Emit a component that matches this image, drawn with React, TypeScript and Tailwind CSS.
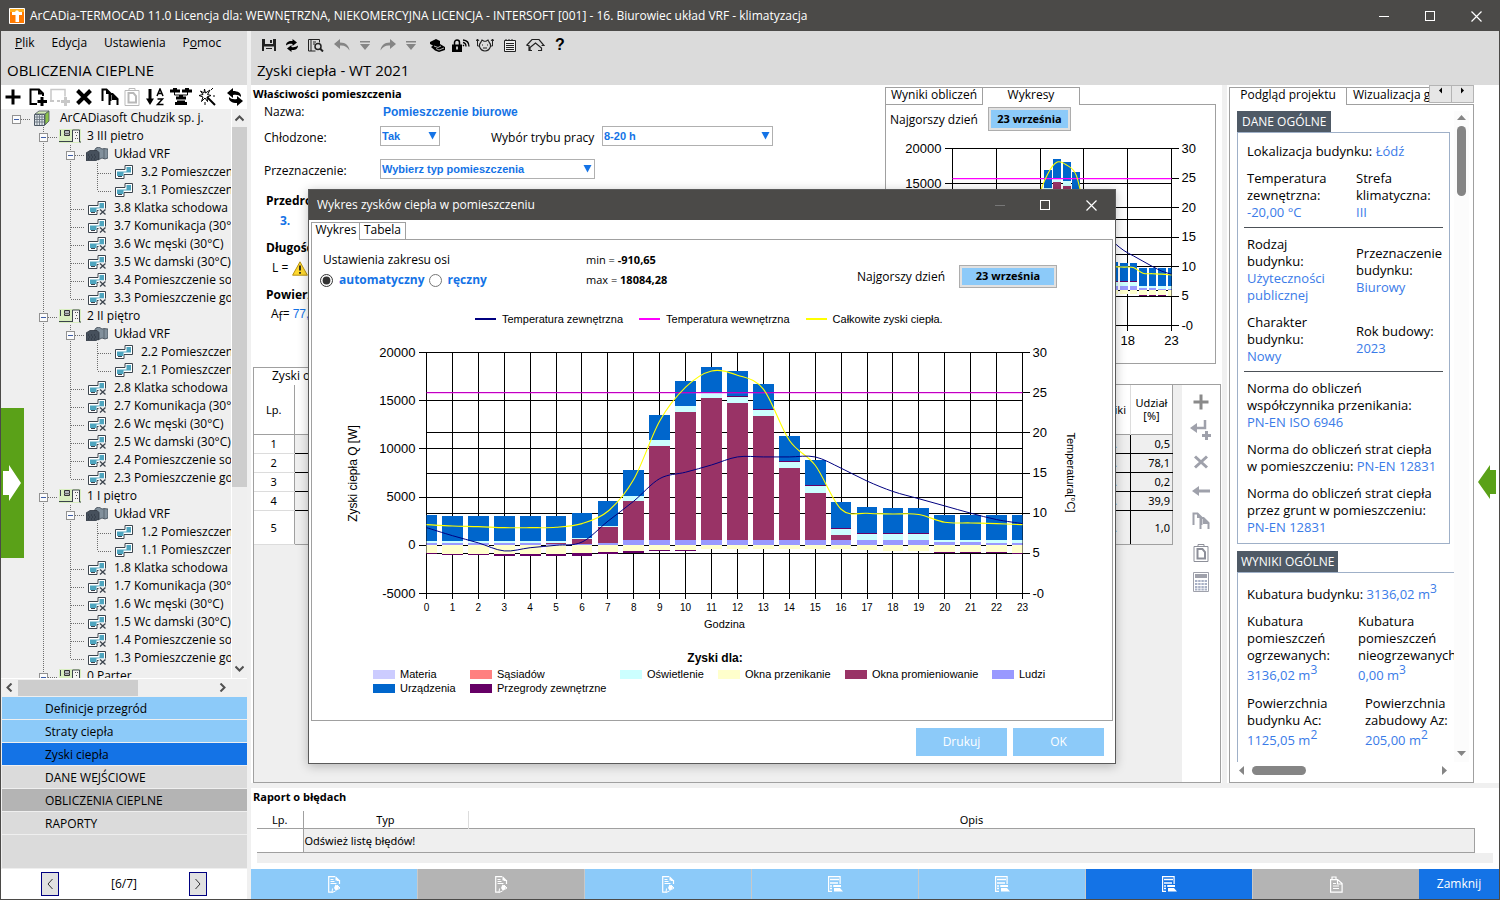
import React from "react";

/* ---------- chart ---------- */

type Hour = {
  people: number;
  radiation: number;
  lighting: number;
  walls: number;
  devices: number;
  windows: number;
  wallsLoss: number;
};

const row = (v: number[]): Hour => ({
  people: v[0],
  radiation: v[1],
  lighting: v[2],
  walls: v[3],
  devices: v[4],
  windows: v[5],
  wallsLoss: v[6],
});

const hours: Hour[] = [
  [210, 0, 240, 0, 2660, 830, 70],
  [210, 0, 210, 0, 2600, 865, 170],
  [210, 0, 210, 0, 2600, 865, 170],
  [210, 0, 210, 0, 2600, 930, 210],
  [210, 0, 210, 0, 2600, 930, 210],
  [140, 70, 210, 0, 2600, 930, 210],
  [170, 450, 100, 0, 2600, 830, 310],
  [210, 1660, 100, 0, 2600, 730, 170],
  [520, 4050, 520, 0, 2700, 620, 210],
  [520, 9760, 620, 0, 2600, 520, 100],
  [520, 13290, 620, 0, 2600, 520, 100],
  [520, 14740, 620, 0, 2600, 410, 0],
  [520, 14220, 620, 100, 2600, 410, 0],
  [520, 12870, 620, 100, 2600, 410, 0],
  [520, 7470, 620, 100, 2600, 410, 0],
  [520, 4880, 730, 100, 2600, 410, 0],
  [520, 520, 620, 100, 2700, 410, 0],
  [520, 0, 620, 100, 2700, 520, 0],
  [520, 0, 620, 100, 2600, 620, 0],
  [520, 0, 620, 100, 2600, 620, 0],
  [310, 0, 210, 0, 2600, 730, 100],
  [310, 0, 210, 0, 2600, 730, 100],
  [210, 0, 310, 0, 2600, 730, 100],
  [210, 0, 310, 0, 2600, 830, 70],
].map(row);

const totals = [
  2145, 2000, 1940, 1830, 1830, 1870, 2250, 3530, 6850, 12900, 16400, 18084, 17650, 16200, 10900,
  8300, 3740, 3320, 3250, 3200, 2390, 2320, 2250, 2145,
];
const outside = [
  8.2, 7.2, 6.3, 5.3, 5.7, 6.0, 6.4, 9, 11.5, 14.3, 15.1, 16, 17, 17, 17, 17, 15.6, 14, 12.7, 11.8,
  10.9, 10, 9.2, 8.7,
];

function smooth(pts: [number, number][]) {
  let d = `M${pts[0][0]} ${pts[0][1]}`;
  for (let i = 0; i < pts.length - 1; i++) {
    const a = pts[Math.max(i - 1, 0)];
    const b = pts[i];
    const c = pts[i + 1];
    const e = pts[Math.min(i + 2, pts.length - 1)];
    d += `C${b[0] + (c[0] - a[0]) / 6} ${b[1] + (c[1] - a[1]) / 6} ${c[0] - (e[0] - b[0]) / 6} ${
      c[1] - (e[1] - b[1]) / 6
    } ${c[0]} ${c[1]}`;
  }
  return d;
}

type GainsChartProps = {
  id: string;
  width: number;
  height: number;
  left: number;
  right: number;
  top: number;
  bottom: number;
  divisions: number;
  xLabels: string[];
  xFont: number;
  xLabelDy: number;
  indoorColor: string;
  titles?: boolean;
  className?: string;
};

function GainsChart(p: GainsChartProps) {
  const step = (p.right - p.left) / 23;
  const px = (h: number) => p.left + h * step;
  const w = (v: number) => p.bottom - ((v + 5000) / 25000) * (p.bottom - p.top);
  const t = (v: number) => p.bottom - (v / 30) * (p.bottom - p.top);
  const snap = (v: number) => Math.round(v - 0.5) + 0.5;
  const bar = step * 0.8;
  const watts = [20000, 15000, 10000, 5000, 0, -5000];
  const temps = [30, 25, 20, 15, 10, 5, 0];
  const indoorY = Math.floor(t(25));
  return (
    <svg
      viewBox={`0 0 ${p.width} ${p.height}`}
      width={p.width}
      height={p.height}
      className={p.className}
      fontFamily="'Liberation Sans', Arial, sans-serif"
      fontSize="13"
      role="img"
      aria-label="Wykres zysków ciepła"
    >
      <clipPath id={p.id}>
        <rect x={p.left} y={p.top} width={p.right - p.left} height={p.bottom - p.top} />
      </clipPath>
      <g stroke="#000" shapeRendering="crispEdges">
        {watts.map((v) => (
          <line key={v} x1={p.left - 8} x2={p.right} y1={snap(w(v))} y2={snap(w(v))} />
        ))}
        {temps.map((v) => (
          <line key={v} x1={v === 25 ? p.right : p.left} x2={p.right + 7} y1={snap(t(v))} y2={snap(t(v))} />
        ))}
        {Array.from({ length: p.divisions + 1 }, (_, i) => {
          const x = snap(p.left + (i * (p.right - p.left)) / p.divisions);
          return <line key={i} x1={x} x2={x} y1={p.top} y2={p.bottom + 5} />;
        })}
      </g>
      <g clipPath={`url(#${p.id})`} shapeRendering="crispEdges">
        {hours.map((h, i) => {
          const parts: [number, string][] = [
            [h.people, "#9999ff"],
            [h.radiation, "#993366"],
            [h.lighting, "#ccffff"],
            [h.walls, "#660066"],
            [h.devices, "#0066cc"],
          ];
          let base = 0;
          const x = px(i) - bar / 2;
          return (
            <g key={i}>
              {parts.map(([v, fill]) => {
                const y0 = w(base);
                base += v;
                return v ? <rect key={fill} x={x} width={bar} y={w(base)} height={y0 - w(base)} fill={fill} /> : null;
              })}
              <rect x={x} width={bar} y={w(0)} height={w(-h.windows) - w(0)} fill="#ffffcc" />
              {h.wallsLoss > 0 && (
                <rect
                  x={x}
                  width={bar}
                  y={w(-h.windows)}
                  height={w(-h.windows - h.wallsLoss) - w(-h.windows)}
                  fill="#660066"
                />
              )}
            </g>
          );
        })}
      </g>
      <rect x={p.left} y={indoorY} width={p.right - p.left} height="1" fill={p.indoorColor} />
      <rect x={p.left} y={indoorY + 1} width={p.right - p.left} height="1" fill="#ff00ff" fillOpacity="0.25" />
      <g fill="none">
        <path d={smooth(totals.map((v, i) => [px(i), w(v)]))} stroke="#ffff00" strokeWidth="1.1" />
        <path d={smooth(outside.map((v, i) => [px(i), t(v)]))} stroke="#000080" strokeWidth="1" />
      </g>
      <g textAnchor="end">
        {watts.map((v) => (
          <text key={v} x={p.left - 11} y={w(v) + 4}>
            {v}
          </text>
        ))}
      </g>
      {temps.map((v) => (
        <text key={v} x={p.right + 10} y={t(v) + 4}>
          {v === 0 ? "-0" : v}
        </text>
      ))}
      <g textAnchor="middle" fontSize={p.xFont}>
        {p.xLabels.map((l, i) => (
          <text key={i} x={p.left + (i * (p.right - p.left)) / (p.xLabels.length - 1)} y={p.bottom + p.xLabelDy}>
            {l}
          </text>
        ))}
      </g>
      {p.titles && (
        <g fontSize="11" textAnchor="middle">
          <text x={p.left + 298} y={p.bottom + 34}>
            Godzina
          </text>
          <text transform={`translate(${p.left - 70} ${p.top + 121}) rotate(-90)`} fontSize="12">
            Zyski ciepła Q [W]
          </text>
          <text transform={`translate(${p.right + 44} ${p.top + 120}) rotate(90)`}>Temperatura[°C]</text>
        </g>
      )}
    </svg>
  );
}

/* ---------- icons ---------- */

type IconProps = { className?: string };

const PlusIcon = ({ className = "" }: IconProps) => (
  <svg width="16" height="16" viewBox="0 0 16 16" className={className}>
    <path d="M8 0.5v15M0.5 8h15" stroke="currentColor" strokeWidth="3" />
  </svg>
);
const CrossIcon = ({ className = "" }: IconProps) => (
  <svg width="16" height="16" viewBox="0 0 16 16" className={className}>
    <path d="M1.500 1.500l13 13M14.500 1.500l-13 13" stroke="currentColor" strokeWidth="4" />
  </svg>
);
const ThinCrossIcon = () => (
  <svg width="16" height="16" viewBox="0 0 16 16">
    <path d="M2 2.500l12 11M14 2.500l-12 11" stroke="currentColor" strokeWidth="3" />
  </svg>
);
const AddPageIcon = () => (
  <svg width="18" height="18" viewBox="0 0 18 18">
    <path d="M8 16H1.500V1.500h8.500l4 4V8M10 1v4.500h4" fill="none" stroke="#000" strokeWidth="2" />
    <path d="M13 9v9M8.500 13.500H18" stroke="#000" strokeWidth="3" />
  </svg>
);
const AddRoomIcon = () => (
  <svg width="21" height="18" viewBox="0 0 21 18" className="text-[#c8c8c8]">
    <path d="M1 12.500V1.500h14v7" fill="none" stroke="currentColor" strokeWidth="1.500" />
    <path d="M0 13h4M7 13h3" stroke="currentColor" strokeWidth="2" />
    <path d="M15.500 9v9M11 13.500h9" stroke="currentColor" strokeWidth="3" />
  </svg>
);
const CopyIcon = ({ className = "" }: IconProps) => (
  <svg width="18" height="18" viewBox="0 0 18 18" className={className}>
    <path d="M1.500 13V1.500h4l4 4V13M8.500 17V6h3l5 5v6" fill="none" stroke="currentColor" strokeWidth="2" />
    <path d="M5 1l5 5H5zM11 5.500l6.500 6.500H11z" fill="currentColor" />
  </svg>
);
const PasteIcon = ({ className = "" }: IconProps) => (
  <svg width="16" height="18" viewBox="0 0 16 18" className={className}>
    <path d="M1 2.500h14v15H1zM5 2V.5h6V2" fill="none" stroke="currentColor" />
    <path d="M4.500 5h5l2.500 3v6.500H4.500z" fill="none" stroke="currentColor" strokeWidth="2" />
  </svg>
);
const SortIcon = () => (
  <svg width="19" height="18" viewBox="0 0 19 18">
    <path d="M4 1v12" stroke="#000" strokeWidth="3" />
    <path d="M0 10.500h8L4 17z" />
    <path d="M11 8l3-7 3 7M12 5.500h4M11.500 11h5l-5 5.500h6" fill="none" stroke="#000" strokeWidth="1.500" />
  </svg>
);
const TreeIcon = () => (
  <svg width="22" height="18" viewBox="0 0 22 18">
    <path d="M0 1.500h3V0h4v1.500h3v3H0zM12 1.500h3V0h4v1.500h3v3H12zM6 8.500h3V7h4v1.500h3v3H6zM5 14h2v-1.500h8V14h2v3H5z" />
    <path d="M4.500 4v3h13V4" fill="none" stroke="#000" strokeWidth="1" />
  </svg>
);
const WandIcon = () => (
  <svg width="18" height="18" viewBox="0 0 18 18">
    <path d="M8 8l9 9" stroke="#000" strokeWidth="2" />
    <path
      d="M6.500 1l1 4 4.500-3-2.500 4.500 3.500 1-4 1.500.5 4.500L7 10l-3.500 3.500L5 9 1 7.500 5 6.500 2.500 3l3.500 2z"
      fill="#fff"
      stroke="#000"
    />
    <path d="M13 2l2-2M15 8h2M7 14v3" stroke="#000" />
  </svg>
);
const SyncIcon = ({ size = 18 }: { size?: number }) => (
  <svg width={size} height={size} viewBox="0 0 18 18">
    <path d="M7 0L1 5l6 5V7c4-.5 6 0 8 2 .5-4-3-6-8-6zM11 18l6-5-6-5v3c-4 .5-6 0-8-2-.5 4 3 6 8 6z" />
  </svg>
);

const SaveIcon = () => (
  <svg width="14" height="12" viewBox="0 0 14 12">
    <path fillRule="evenodd" d="M0 0h14v12H0zM3 0v5h8V0zM2 7.500V12h10V7.500z" fill="#222" />
    <path d="M8 1h2v3H8zM4 9h6v1H4z" fill="#222" />
  </svg>
);
const SwapIcon = () => (
  <svg width="12" height="13" viewBox="0 0 12 13">
    <path d="M0 6.500C0 3 3 1.500 6.500 2V0L11 3.500 6.500 7V5C4 4.500 2 5 0 6.500zM12 6.500C12 10 9 11.500 5.500 11v2L1 9.500 5.500 6v2c2.500.5 4.500 0 6.500-1.500z" />
  </svg>
);
const BookSearchIcon = () => (
  <svg width="16" height="13" viewBox="0 0 16 13">
    <path d="M.5.500h11v3M.5.500v11.500h7M3 .5v11.500M5 3h3M5 5h2" fill="none" stroke="#222" />
    <circle cx="10" cy="7.500" r="3" fill="none" stroke="#222" strokeWidth="1.500" />
    <path d="M12 9.500l3 3" stroke="#222" strokeWidth="2" />
  </svg>
);
const UndoIcon = ({ className = "" }: IconProps) => (
  <svg width="16" height="12" viewBox="0 0 16 12" className={className}>
    <path d="M6 0L0 5l6 5V6.500c4-.5 7 1 9.500 5C15 7 12 3.500 6 3.500z" fill="#858585" />
  </svg>
);
const DropIcon = () => (
  <svg width="10" height="9" viewBox="0 0 10 9">
    <path d="M0 0h10v1.500H0zM0 3h10L5 9z" fill="#858585" />
  </svg>
);
const BoxesIcon = () => (
  <svg width="15" height="13" viewBox="0 0 15 13">
    <path d="M0 3l6-3 4 2v3l5 3v3l-6 2-4-1.500L1 8l2-1.500L0 5z" />
    <path d="M4 7l4 1.500L11 7M6 9.500l3 1.500 5-2" stroke="#ddd" fill="none" strokeWidth=".8" />
  </svg>
);
const LockSignalIcon = () => (
  <svg width="18" height="13" viewBox="0 0 18 13">
    <path d="M2.500 6V3.500a2.500 2.500 0 015 0V6" fill="none" stroke="#000" strokeWidth="1.500" />
    <path d="M0 5.500h10V13H0z" />
    <path d="M5 7.500v3" stroke="#fff" strokeWidth="1.500" />
    <path d="M11 7l1-1M11 3.500q3 .5 3 4M11 1q6 .5 6 6.500" fill="none" stroke="#000" strokeWidth="1.300" />
  </svg>
);
const PigIcon = () => (
  <svg width="18" height="14" viewBox="0 0 18 14">
    <path d="M5 4l1-2 2 1.200h2L12 2l1 2q2 2 1.500 4.500Q13 13 9 13T3.500 8.500Q3 6 5 4z" fill="none" stroke="#222" strokeWidth="1.100" />
    <path d="M3.500 8H1.500V1M0 3l1.500-2L3 3M14.500 8h2V1M15 3l1.500-2L18 3" stroke="#222" fill="none" />
    <path d="M6 7h1M11 7h1M7 10h4" stroke="#222" strokeWidth="1.200" />
  </svg>
);
const NotepadIcon = () => (
  <svg width="12" height="13" viewBox="0 0 12 13">
    <path d="M.5 1.500h11v11H.5z" fill="#eee" stroke="#222" />
    <path d="M2 0v2M5 0v2M8 0v2M2 4.500h8M2 6.500h8M2 8.500h8M2 10.500h8" stroke="#222" />
  </svg>
);
const HouseIcon = () => (
  <svg width="19" height="14" viewBox="0 0 19 14">
    <path d="M.5 7.500L6 1.500h7l5 6h-2.500M.5 7.500H3v5h3M4 12.500v-3L9.500 5l6 5v2.500H12" fill="none" stroke="#222" strokeWidth="1.200" />
  </svg>
);

const BuildingIcon = () => (
  <svg width="16" height="16" viewBox="0 0 16 16" className="ml-1">
    <path d="M1 4l4-3h10l-4 3z" fill="#d6ebb8" stroke="#4c5763" strokeWidth=".8" />
    <path d="M11 4l4-3v10l-4 4z" fill="#8bc34a" stroke="#4c5763" strokeWidth=".8" />
    <path d="M.5 4.500h10v11H.5z" fill="#dfe5ea" stroke="#4c5763" />
    <path d="M3 4v11M5.500 4v11M8 4v11M.5 7h10M.5 9.500h10M.5 12h10" stroke="#6b7682" strokeWidth=".9" />
  </svg>
);
const FloorIcon = () => (
  <svg width="22" height="14" viewBox="0 0 22 14" className="ml-[2px]">
    <path d="M0 0h22v14H0z" fill="#d9eec0" />
    <path d="M14 1h7v12h-7z" fill="#f4f4f4" />
    <path d="M1.500 1v6M0 12.500h13.500M13.500 13V1h7v12h1.500" fill="none" stroke="#3c444d" />
    <path d="M5.500 1.500h5v5h-5z" fill="#b4b8bd" stroke="#333" />
    <path d="M5 4.500h6" stroke="#666" />
    <path d="M16 3.500h1M18 3.500h1M17 6.500h1M16 9.500h1M18 9.500h1" stroke="#555" />
  </svg>
);
const VrfIcon = () => (
  <svg width="22" height="14" viewBox="0 0 22 14" className="ml-[2px]">
    <path d="M8 4l2-3 3-1 3 2 2-.5L22 2v9l-3 1-3-1-4 2z" fill="#82909c" stroke="#3f4954" strokeWidth=".8" />
    <path d="M18 2v10" stroke="#3f4954" strokeWidth=".6" />
    <path d="M0 6l4-2.500h7l2 2V12l-3 1.500H0z" fill="#46505c" stroke="#2e3640" strokeWidth=".8" />
    <path d="M2 8h1M5 8h1M8 8h1M3 10h1M6 10h1M9 10h1M2 12h1M5 12h1M8 12h1" stroke="#28303a" />
  </svg>
);
const RoomIcon = ({ crossed = false }: { crossed?: boolean }) => (
  <svg width="19" height="14" viewBox="0 0 19 14" className="ml-1">
    <path d="M.5 4.500H10V.5h7.500v9H9v4H.5z" fill="#fff" stroke="#3c444d" />
    <path d="M2 6.500h9.500V2H16v5.500H8.500V11H2z" fill="#4ea5bf" />
    <path d="M3 11.500h4" stroke="#3c444d" />
    {crossed && (
      <>
        <path d="M10.500 7.500H19V14h-8.500z" fill="#efefef" />
        <path d="M12 8.500l5.500 5M17.500 8.500l-5.500 5" stroke="#3c444d" strokeWidth="1.300" />
      </>
    )}
  </svg>
);

const BackPlusIcon = () => (
  <svg width="22" height="20" viewBox="0 0 22 20" className="text-[#9fa1ab]">
    <path d="M15 0v8H5" fill="none" stroke="currentColor" strokeWidth="2.500" />
    <path d="M0 8l7-5v10z" fill="currentColor" />
    <path d="M12 15.500h9M16.500 11v9" stroke="currentColor" strokeWidth="3" />
  </svg>
);
const BackIcon = () => (
  <svg width="18" height="12" viewBox="0 0 18 12" className="text-[#9fa1ab]">
    <path d="M0 6l7-5v10z" fill="currentColor" />
    <path d="M5 6h13" stroke="currentColor" strokeWidth="3" />
  </svg>
);
const CalcIcon = () => (
  <svg width="16" height="20" viewBox="0 0 16 20">
    <path d="M.5.500h15v19H.5z" fill="#fff" stroke="#9fa1ab" />
    <path d="M2 2h12v4H2z" fill="#9fa1ab" />
    <path d="M2 9h12M2 12h12M2 15h12M2 17.500h12" stroke="#a9b1c6" strokeWidth="1.800" strokeDasharray="2.400 0.800" />
  </svg>
);
const EditPageIcon = () => (
  <svg width="13" height="17" viewBox="0 0 13 17">
    <path d="M7 .700H.700v15.500H4M9 4.500h2.500V8" fill="none" stroke="#fff" strokeWidth="1.200" />
    <path d="M7.500 0l4.500 4.500H7.500zM7.500 8.500L11 11l-1 1.500L8 15l-2-3z" fill="#fff" />
    <path d="M9 9l3 3-2.500 1.500zM2.500 3.500h3M2.500 5.500h4M2.500 7.500h6M4.500 12.500L4 16.500l3.500-1.500" stroke="#fff" fill="none" />
  </svg>
);
const SheetIcon = () => (
  <svg width="15" height="16" viewBox="0 0 15 16">
    <path d="M4 15.400H.600V.600h11.500V8" fill="none" stroke="#fff" strokeWidth="1.200" />
    <path d="M2 3.500h9M2 7h8M2 10h2M5 10h5M2 12.500h2" stroke="#fff" strokeWidth="1.500" />
    <path d="M6 9h7v2H6zM6 12h6l3 3.500H6z" fill="#fff" />
  </svg>
);
const ReportIcon = () => (
  <svg width="13" height="17" viewBox="0 0 13 17">
    <path d="M.6 3.600h7l4.500 4v8.500H.6zM2 3V1h4v2M7.500 4v4H12" fill="none" stroke="#fff" strokeWidth="1.200" />
    <path d="M3 7.500h3M3 10h6M3 12.500h6" stroke="#fff" />
  </svg>
);

const Min = ({ className = "" }: IconProps) => (
  <svg width="11" height="11" viewBox="0 0 11 11" className={className}>
    <path d="M0 5.500h10" stroke="currentColor" shapeRendering="crispEdges" />
  </svg>
);
const Max = () => (
  <svg width="11" height="11" viewBox="0 0 11 11">
    <path d="M.5.500h9v9h-9z" stroke="currentColor" fill="none" shapeRendering="crispEdges" />
  </svg>
);
const Close = () => (
  <svg width="11" height="11" viewBox="0 0 11 11">
    <path d="M.5.500l10 10M10.500.500l-10 10" stroke="currentColor" strokeWidth="1.200" />
  </svg>
);
const Chevron = ({ d }: { d: string }) => (
  <svg width="9" height="9" viewBox="0 0 9 9">
    <path d={d} fill="none" stroke="#505050" strokeWidth="2" />
  </svg>
);
const Tri = ({ d, className = "fill-[#858585]" }: { d: string; className?: string }) => (
  <svg width="9" height="9" viewBox="0 0 9 9" className={className}>
    <path d={d} />
  </svg>
);
const LEFT = "M6.500 .5l-4 4 4 4";
const RIGHT = "M2.500 .5l4 4-4 4";
const UP = "M.5 6.500l4-4 4 4";
const DOWN = "M.5 2.500l4 4 4-4";

/* ---------- room tree ---------- */

type Cell = "blank" | "line" | "tee" | "end" | "box" | "rootbox";

const Guide = ({ kind }: { kind: Cell }) => (
  <svg width="27" height="18" viewBox="0 0 27 18" className="shrink-0">
    <g stroke="#6d6d6d" strokeDasharray="1 1" shapeRendering="crispEdges">
      {(kind === "line" || kind === "tee" || kind === "box") && <path d="M13.500 0v18" />}
      {kind === "end" && <path d="M13.500 0v10" />}
      {kind !== "blank" && kind !== "line" && <path d="M14 10.500h14" />}
    </g>
    {(kind === "box" || kind === "rootbox") && (
      <g shapeRendering="crispEdges">
        <rect x="9.500" y="6.500" width="8" height="8" fill="#fbfbfb" stroke="#919191" />
        <path d="M11 10.500h5" stroke="#3f5fa8" />
      </g>
    )}
  </svg>
);

type Node = { cells: Cell[]; icon: React.ReactNode; pad: string; text: string };

const plainRooms = [
  "8 Klatka schodowa (30°C)",
  "7 Komunikacja (30°C)",
  "6 Wc męski (30°C)",
  "5 Wc damski (30°C)",
  "4 Pomieszczenie socjalne",
  "3 Pomieszczenie gospodarcze",
];

const floorNodes = (n: number, name: string): Node[] => [
  { cells: ["blank", "box"], icon: <FloorIcon />, pad: "pl-[6px]", text: name },
  { cells: ["blank", "line", "box"], icon: <VrfIcon />, pad: "pl-[6px]", text: "Układ VRF" },
  { cells: ["blank", "line", "line", "tee"], icon: <RoomIcon />, pad: "pl-[7px]", text: `${n}.2 Pomieszczenie` },
  { cells: ["blank", "line", "line", "end"], icon: <RoomIcon />, pad: "pl-[7px]", text: `${n}.1 Pomieszczenie` },
  ...plainRooms.map((r, i): Node => ({
    cells: ["blank", "line", i === plainRooms.length - 1 ? "end" : "tee"],
    icon: <RoomIcon crossed />,
    pad: "pl-[7px]",
    text: `${n}.${r}`,
  })),
];

const nodes: Node[] = [
  { cells: ["rootbox"], icon: <BuildingIcon />, pad: "pl-[10px]", text: "ArCADiasoft Chudzik sp. j." },
  ...floorNodes(3, "3 III pietro"),
  ...floorNodes(2, "2 II piętro"),
  ...floorNodes(1, "1 I piętro"),
  { cells: ["blank", "box"], icon: <FloorIcon />, pad: "pl-[6px]", text: "0 Parter" },
];

function Sidebar() {
  return (
    <aside className="flex w-[246px] shrink-0 flex-col bg-[#efefef]">
      <div className="h-[54px] shrink-0 bg-[#dbdbdb]">
        <nav className="flex gap-[17px] pt-[3px] pl-[14px] text-[12px] leading-[18px]">
          <button><u>P</u>lik</button>
          <button>Edycja</button>
          <button>Ustawienia</button>
          <button>P<u>o</u>moc</button>
        </nav>
        <h2 className="pt-[8px] pl-[6px] text-[15px] leading-[20px]">OBLICZENIA CIEPLNE</h2>
      </div>
      <div className="flex h-6 shrink-0 items-center justify-between bg-white pr-[3px] pl-[4px]">
        <button aria-label="Dodaj"><PlusIcon /></button>
        <button aria-label="Dodaj stronę" className="pl-[3px]"><AddPageIcon /></button>
        <button aria-label="Dodaj pomieszczenie" className="-ml-[3px]"><AddRoomIcon /></button>
        <button aria-label="Usuń"><CrossIcon /></button>
        <button aria-label="Kopiuj" className="pl-[3px]"><CopyIcon /></button>
        <button aria-label="Wklej"><PasteIcon className="text-[#b9b9b9]" /></button>
        <button aria-label="Sortuj"><SortIcon /></button>
        <button aria-label="Struktura"><TreeIcon /></button>
        <button aria-label="Kreator"><WandIcon /></button>
        <button aria-label="Odśwież" className="pl-[5px]"><SyncIcon /></button>
      </div>
      <div className="flex min-h-0 flex-1">
        <ul className="min-w-0 flex-1 overflow-hidden pl-[2px] text-[12px] leading-[18px]">
          {nodes.map((n, i) => (
            <li key={i} className="flex h-[18px] items-center whitespace-nowrap">
              {n.cells.map((c, k) => (
                <Guide key={k} kind={c} />
              ))}
              <span className="shrink-0">{n.icon}</span>
              <span className={n.pad}>{n.text}</span>
            </li>
          ))}
        </ul>
        <div className="flex w-[16px] shrink-0 flex-col items-center justify-between border-l border-white py-[5px]">
          <Chevron d={UP} />
          <div className="mt-1 w-full flex-1">
            <div className="h-[67%] w-full bg-[#cdcdcd]" />
          </div>
          <Chevron d={DOWN} />
        </div>
      </div>
      <div className="flex h-[18px] shrink-0 items-center border-t border-white pr-5 pl-1">
        <Chevron d={LEFT} />
        <div className="ml-1 h-4 flex-1">
          <div className="h-full w-[60%] bg-[#cdcdcd]" />
        </div>
        <Chevron d={RIGHT} />
      </div>
      <nav className="flex flex-col pt-px pl-px text-[12px] leading-[24px]">
        <button className="mb-px h-[22px] bg-[#8ccaf9] pl-[43px] text-left">Definicje przegród</button>
        <button className="mb-px h-[22px] bg-[#8ccaf9] pl-[43px] text-left">Straty ciepła</button>
        <button className="mb-px h-[22px] bg-[#1473e6] pl-[43px] text-left">Zyski ciepła</button>
        <button className="mb-px h-[22px] bg-[#dbdbdb] pl-[43px] text-left">DANE WEJŚCIOWE</button>
        <button className="mb-px h-[22px] bg-[#b4b4b4] pl-[43px] text-left">OBLICZENIA CIEPLNE</button>
        <button className="mb-px h-[22px] bg-[#dbdbdb] pl-[43px] text-left">RAPORTY</button>
        <div className="mb-px h-[33px] bg-[#dbdbdb]" />
      </nav>
      <div className="flex h-[30px] shrink-0 items-center justify-between bg-white px-[40px] text-[12px]">
        <button aria-label="Poprzedni" className="flex h-6 w-[18px] items-center justify-center border border-[#000080] bg-[#e1e1e1]">
          <svg width="6" height="12" viewBox="0 0 6 12"><path d="M5.500 1L1 6l4.500 5" fill="none" stroke="#333" /></svg>
        </button>
        <span>[6/7]</span>
        <button aria-label="Następny" className="flex h-6 w-[18px] items-center justify-center border border-[#000080] bg-[#e1e1e1]">
          <svg width="6" height="12" viewBox="0 0 6 12"><path d="M.5 1L5 6 .5 11" fill="none" stroke="#333" /></svg>
        </button>
      </div>
    </aside>
  );
}

/* ---------- centre ---------- */

function Combo({ id, value, width }: { id: string; value: string; width: string }) {
  return (
    <div className={`relative ${width}`}>
      <select
        id={id}
        className="block h-5 w-full appearance-none border border-[#b0b0b0] bg-white pl-px font-['Liberation_Sans',Arial,sans-serif] text-[11px] font-bold text-[#1473e6]"
      >
        <option>{value}</option>
      </select>
      <Tri d="M.5 1h8l-4 7.500z" className="pointer-events-none absolute top-[5px] right-[3px] fill-[#1473e6]" />
    </div>
  );
}

function RoomForm() {
  return (
    <section className="min-w-0 flex-1 pl-[2px] text-[12px] leading-[16px]">
      <h3 className="text-[11px] leading-[18px] font-bold">Właściwości pomieszczenia</h3>
      <div className="flex h-[18px] items-center pl-[11px]">
        <span className="w-[119px]">Nazwa:</span>
        <span className="font-['Liberation_Sans',Arial,sans-serif] text-[12px] font-bold text-[#1473e6]">Pomieszczenie biurowe</span>
      </div>
      <div className="flex h-[29px] items-center pl-[11px]">
        <label htmlFor="cooled" className="w-[116px] pt-[5px]">Chłodzone:</label>
        <Combo id="cooled" value="Tak" width="w-[60px]" />
        <label htmlFor="mode" className="ml-[51px] w-[111px] pt-[5px]">Wybór trybu pracy</label>
        <Combo id="mode" value="8-20 h" width="w-[171px]" />
      </div>
      <div className="flex h-[38px] items-center pl-[11px]">
        <label htmlFor="purpose" className="w-[116px] pt-1">Przeznaczenie:</label>
        <Combo id="purpose" value="Wybierz typ pomieszczenia" width="w-[215px]" />
      </div>
      <div className="pl-[13px]">
        <h4 className="mt-[5px] font-bold">Przedrostek</h4>
        <p className="mt-[4px] pl-[14px] font-bold text-[#1473e6]">3.</p>
        <h4 className="mt-[11px] font-bold">Długość</h4>
        <p className="mt-1 flex items-center gap-1 pl-[6px]">
          L =
          <svg width="16" height="15" viewBox="0 0 16 15">
            <path d="M8 .8l7.400 13.400H.6z" fill="#ffd92e" stroke="#b99214" strokeLinejoin="round" />
            <path d="M8 4.500v5M8 11v1.800" stroke="#222" strokeWidth="1.800" />
          </svg>
        </p>
        <h4 className="mt-[11px] font-bold">Powierzchnia</h4>
        <p className="mt-[3px] pl-[5px]">
          A<sub className="text-[12px]">f</sub>={" "}
          <span className="font-['Liberation_Sans',Arial,sans-serif] text-[#1473e6]">77,04</span>
        </p>
      </div>
    </section>
  );
}

function DayButton({ className = "" }: IconProps) {
  return (
    <button className={`border border-[#adadad] bg-[#e1e1e1] p-[2px] ${className}`}>
      <span className="flex h-full items-center justify-center bg-[#8ccaf9] text-[11px] font-bold">23 września</span>
    </button>
  );
}

function ResultsCard() {
  return (
    <section className="mr-[6px] flex w-[331px] shrink-0 flex-col pt-[2px] text-[12px] leading-[14px]">
      <div className="flex h-[17px] items-end">
        <button className="h-[17px] w-[98px] border border-b-0 border-[#a0a0a0] pb-[2px]">Wyniki obliczeń</button>
        <button className="z-10 -mb-px h-[18px] w-[97px] border border-b-0 border-l-0 border-[#a0a0a0] bg-white pb-[3px]">Wykresy</button>
      </div>
      <div className="flex-1 border border-[#a0a0a0]">
        <div className="flex h-[28px] items-center pl-[4px]">
          <span className="w-[98px] pt-[2px]">Najgorszy dzień</span>
          <DayButton className="h-6 w-[83px]" />
        </div>
        <GainsChart
          id="clip-small"
          width={329}
          height={230}
          left={66.5}
          right={285.5}
          top={15.5}
          bottom={192.5}
          divisions={5}
          xLabels={["0", "3", "8", "13", "18", "23"]}
          xFont={13}
          xLabelDy={19}
          indoorColor="#ff00ff"
        />
      </div>
    </section>
  );
}

const gains = [
  ["1", "0,5", "h-[19px]"],
  ["2", "78,1", "h-[19px]"],
  ["3", "0,2", "h-[19px]"],
  ["4", "39,9", "h-[19px]"],
  ["5", "1,0", "h-[34px]"],
];

function GainsPanel() {
  return (
    <section className="flex min-h-0 flex-1 flex-col pr-px pl-[2px] text-[12px]">
      <button className="z-10 -mb-px h-[18px] w-[120px] self-start border border-b-0 border-[#a0a0a0] bg-white pb-[2px] pl-[18px] text-left leading-[15px]">Zyski od</button>
      <div className="flex min-h-0 flex-1 border border-[#a0a0a0] bg-[#efefef]">
        <div className="min-w-0 flex-1">
          <table className="w-full table-fixed border-collapse border-r border-b border-[#a0a0a0] font-['Noto_Sans',sans-serif] text-[11px] leading-[13px]">
            <thead>
              <tr className="h-[49px] border-b border-[#a0a0a0] bg-white">
                <th className="w-[40px] border-r border-[#a0a0a0] font-normal">Lp.</th>
                <th className="font-normal" />
                <th className="w-[90px] border-r border-[#dcdcdc] pr-[4px] text-right font-normal">Wyniki</th>
                <th className="w-[42px] font-normal">Udział [%]</th>
              </tr>
            </thead>
            <tbody>
              {gains.map(([n, v, h], i) => {
                const edge = i === gains.length - 1 ? "border-b border-b-[#a0a0a0]" : "border-b border-b-black";
                return (
                  <tr key={n} className={h}>
                    <td className="border-r border-b border-r-[#a0a0a0] border-b-[#dcdcdc] bg-white text-center">{n}</td>
                    <td className={edge} />
                    <td className={`border-r border-r-black pr-[13px] text-right ${edge}`}>.</td>
                    <td className={`pr-[2px] text-right ${edge}`}>{v}</td>
                  </tr>
                );
              })}
            </tbody>
          </table>
        </div>
        <div className="ml-[9px] flex w-[38px] shrink-0 flex-col items-center gap-[14px] bg-white pt-[9px] text-[#9fa1ab]">
          <button aria-label="Dodaj" className="text-[#8a8a8a]"><PlusIcon /></button>
          <button aria-label="Wstaw" className="-mt-1"><BackPlusIcon /></button>
          <button aria-label="Usuń"><ThinCrossIcon /></button>
          <button aria-label="Cofnij" className="h-[14px]"><BackIcon /></button>
          <button aria-label="Kopiuj"><CopyIcon /></button>
          <button aria-label="Wklej" className="text-[#8d8f99]"><PasteIcon /></button>
          <button aria-label="Kalkulator" className="-mt-1"><CalcIcon /></button>
        </div>
      </div>
    </section>
  );
}

/* ---------- project preview ---------- */

const Val = ({ children }: { children: React.ReactNode }) => <span className="text-[#3a7be8]">{children}</span>;
const UnitVal = ({ children }: { children: React.ReactNode }) => (
  <span className="block pt-[3px] text-[#3a7be8]">{children}</span>
);
const Sup = ({ children }: { children: React.ReactNode }) => <sup className="text-[12px]">{children}</sup>;
const Rule = () => <hr className="-mx-[3px] border-[#4c5157]" />;

function Preview() {
  return (
    <aside className="flex min-h-0 w-[245px] shrink-0 flex-col pt-[2px]">
      <div className="flex h-[17px] text-[12px] leading-[14px]">
        <button className="z-10 -mb-px h-[18px] w-[117px] border border-r-0 border-b-0 border-[#a0a0a0] bg-white pb-[3px]">Podgląd projektu</button>
        <button className="w-[83px] overflow-hidden border-t border-l border-[#a0a0a0] pb-[2px] pl-[6px] text-left whitespace-nowrap">Wizualizacja graficzna</button>
        <button aria-label="W lewo" className="-mt-[2px] flex h-[18px] w-[23px] shrink-0 items-center justify-center border border-[#b4b4b4] bg-[#e6e6e6] pb-2">
          <Tri d="M6 1.500v6l-3-3z" className="shrink-0 fill-black" />
        </button>
        <button aria-label="W prawo" className="-mt-[2px] flex h-[18px] w-[22px] shrink-0 items-center justify-center border border-l-0 border-[#b4b4b4] bg-[#e6e6e6] pb-2">
          <Tri d="M3 1.500v6l3-3z" className="shrink-0 fill-black" />
        </button>
      </div>
      <div className="flex min-h-0 flex-1 flex-col border border-[#a0a0a0] pt-[6px] pl-[7px]">
        <div className="flex min-h-0 flex-1">
          <div className="min-w-0 flex-1 overflow-hidden text-[13px] leading-[17px]">
            <h3 className="inline-block h-[21px] bg-[#4f5a66] px-[5px] align-top text-[12px] leading-[21px] text-white">DANE OGÓLNE</h3>
            <div className="mr-1 border border-[#9fb0c8] px-[9px] pt-[10px] pb-[7px]">
              <p>Lokalizacja budynku: <Val>Łódź</Val></p>
              <div className="mt-[10px] mb-[6px] grid grid-cols-[109px_1fr]">
                <p>Temperatura<br />zewnętrzna:<br /><Val>-20,00 °C</Val></p>
                <p>Strefa<br />klimatyczna:<br /><Val>III</Val></p>
              </div>
              <Rule />
              <div className="mt-[8px] mb-[6px] grid grid-cols-[109px_1fr] items-center gap-y-[10px] whitespace-nowrap">
                <p>Rodzaj<br />budynku:<br /><Val>Użyteczności<br />publicznej</Val></p>
                <p>Przeznaczenie<br />budynku:<br /><Val>Biurowy</Val></p>
                <p>Charakter<br />budynku:<br /><Val>Nowy</Val></p>
                <p>Rok budowy:<br /><Val>2023</Val></p>
              </div>
              <Rule />
              <div className="mt-[8px] flex flex-col gap-[10px] whitespace-nowrap">
                <p>Norma do obliczeń<br />współczynnika przenikania:<br /><Val>PN-EN ISO 6946</Val></p>
                <p>Norma do obliczeń strat ciepła<br />w pomieszczeniu: <Val>PN-EN 12831</Val></p>
                <p>Norma do obliczeń strat ciepła<br />przez grunt w pomieszczeniu:<br /><Val>PN-EN 12831</Val></p>
              </div>
            </div>
            <h3 className="mt-[7px] inline-block h-[21px] bg-[#4f5a66] px-[4px] align-top text-[12px] leading-[21px] text-white">WYNIKI OGÓLNE</h3>
            <div className="w-[240px] border border-[#9fb0c8] px-[9px] pt-[13px] whitespace-nowrap">
              <p>Kubatura budynku: <Val>3136,02 m<Sup>3</Sup></Val></p>
              <div className="mt-[10px] grid grid-cols-[111px_1fr]">
                <p>Kubatura<br />pomieszczeń<br />ogrzewanych:<UnitVal>3136,02 m<Sup>3</Sup></UnitVal></p>
                <p>Kubatura<br />pomieszczeń<br />nieogrzewanych:<UnitVal>0,00 m<Sup>3</Sup></UnitVal></p>
              </div>
              <div className="mt-[11px] grid grid-cols-[118px_1fr]">
                <p>Powierzchnia<br />budynku Ac:<UnitVal>1125,05 m<Sup>2</Sup></UnitVal></p>
                <p>Powierzchnia<br />zabudowy Az:<UnitVal>205,00 m<Sup>2</Sup></UnitVal></p>
              </div>
              <div className="mt-[10px] grid grid-cols-[118px_1fr]">
                <p>Powierzchnia</p>
                <p>Powierzchnia</p>
              </div>
            </div>
          </div>
          <div className="mr-[4px] flex w-[15px] shrink-0 flex-col items-center bg-[#fcfcfc] pt-[2px] pb-1">
            <Tri d="M0 7h9L4.500 2z" />
            <div className="mt-[4px] h-[70px] w-[9px] rounded-full bg-[#858585]" />
            <div className="flex-1" />
            <Tri d="M0 2h9L4.500 7z" />
          </div>
        </div>
        <div className="mb-1 flex h-[16px] shrink-0 items-center pr-[24px] pl-0">
          <Tri d="M7 0v9L2 4.500z" />
          <div className="ml-[6px] h-[9px] w-[54px] rounded-full bg-[#858585]" />
          <div className="flex-1" />
          <Tri d="M2 0v9l5-4.500z" />
        </div>
      </div>
    </aside>
  );
}

/* ---------- dialog ---------- */

const lineLegend = [
  ["bg-[#000080]", "Temperatura zewnętrzna"],
  ["bg-[#ff00ff]", "Temperatura wewnętrzna"],
  ["bg-[#ffff00]", "Całkowite zyski ciepła."],
];
const barLegend = [
  ["bg-[#ccccff]", "Materia"],
  ["bg-[#ff8080]", "Sąsiadów"],
  ["bg-[#ccffff]", "Oświetlenie"],
  ["bg-[#ffffcc]", "Okna przenikanie"],
  ["bg-[#993366]", "Okna promieniowanie"],
  ["bg-[#9999ff]", "Ludzi"],
  ["bg-[#0066cc]", "Urządzenia"],
  ["bg-[#660066]", "Przegrody zewnętrzne"],
];

function GainsDialog() {
  return (
    <div
      role="dialog"
      aria-label="Wykres zysków ciepła w pomieszczeniu"
      className="absolute top-[188px] left-[307px] z-30 flex h-[575px] w-[808px] flex-col border border-[#5a5a5a] bg-white text-[12px] shadow-[0_2px_10px_rgba(0,0,0,0.25)]"
    >
      <header className="flex h-[30px] shrink-0 items-center bg-[#4b4a48] pl-2 text-white">
        <span className="flex-1">Wykres zysków ciepła w pomieszczeniu</span>
        <button aria-label="Minimalizuj" className="flex w-[46px] justify-center text-[#777]"><Min /></button>
        <button aria-label="Maksymalizuj" className="flex w-[44px] justify-center"><Max /></button>
        <button aria-label="Zamknij" className="flex w-[48px] justify-center"><Close /></button>
      </header>
      <div className="flex min-h-0 flex-1 flex-col px-[2px] pt-[2px]">
        <div className="flex h-[17px] leading-[14px]">
          <button className="z-10 -mb-px h-[18px] w-[48px] border border-r-0 border-b-0 border-[#a0a0a0] bg-white pb-[3px] pl-px">Wykres</button>
          <button className="h-[17px] w-[47px] border border-b-0 border-[#a0a0a0] pb-[2px]">Tabela</button>
        </div>
        <div className="h-[482px] border border-[#a0a0a0]">
          <div className="flex h-[66px] pt-[10px]">
            <div role="radiogroup" aria-labelledby="range-title" className="w-[274px] pl-[8px]">
              <p id="range-title" className="pl-[3px] leading-[20px]">Ustawienia zakresu osi</p>
              <div className="flex items-center leading-[20px] font-bold text-[#1473e6]">
                <input type="radio" name="range" id="auto" defaultChecked className="h-[13px] w-[13px] accent-[#333]" />
                <label htmlFor="auto" className="pr-[4px] pl-[6px]">automatyczny</label>
                <input type="radio" name="range" id="manual" className="h-[13px] w-[13px]" />
                <label htmlFor="manual" className="pl-[6px]">ręczny</label>
              </div>
            </div>
            <div className="flex-1 text-[11px] leading-[20px]">
              <p>min = <b>-910,65</b></p>
              <p>max = <b>18084,28</b></p>
            </div>
            <div className="flex items-center pr-[55px] pb-[3px]">
              <span className="pr-[14px]">Najgorszy dzień</span>
              <DayButton className="h-[23px] w-[98px]" />
            </div>
          </div>
          <ul className="flex h-[26px] items-center gap-[16px] pl-[163px] font-['Liberation_Sans',Arial,sans-serif] text-[11px]">
            {lineLegend.map(([c, l]) => (
              <li key={l} className="flex items-center gap-[6px]">
                <span className={`h-[2px] w-[21px] ${c}`} />
                {l}
              </li>
            ))}
          </ul>
          <GainsChart
            id="clip-main"
            width={800}
            height={312}
            left={114.5}
            right={710.5}
            top={20.5}
            bottom={261.5}
            divisions={23}
            xLabels={Array.from({ length: 24 }, (_, i) => String(i))}
            xFont={10}
            xLabelDy={17}
            indoorColor="#c000c0"
            titles
          />
          <div className="font-['Liberation_Sans',Arial,sans-serif] text-[11px] leading-[14px]">
            <h4 className="mt-[6px] pl-[6px] text-center text-[12px] leading-[16px] font-bold">Zyski dla:</h4>
            <ul className="mt-px grid grid-cols-[97px_150px_98px_127px_147px_1fr] pl-[61px] whitespace-nowrap">
              {barLegend.map(([c, l]) => (
                <li key={l} className="flex items-center gap-[5px]">
                  <span className={`h-[9px] w-[22px] ${c}`} />
                  {l}
                </li>
              ))}
            </ul>
          </div>
        </div>
        <footer className="flex flex-1 items-center justify-end gap-[6px] pr-[9px] text-white">
          <button className="h-[28px] w-[91px] bg-[#8ccaf9]">Drukuj</button>
          <button className="h-[28px] w-[91px] bg-[#8ccaf9]">OK</button>
        </footer>
      </div>
    </div>
  );
}

/* ---------- page ---------- */

export default function App() {
  return (
    <div className="relative flex h-screen flex-col overflow-hidden border border-[#4b4a48] bg-[#f0f0f0] font-['Open_Sans','Noto_Sans',sans-serif] text-[12px] text-black">
      <header className="flex h-[30px] shrink-0 items-center bg-[#4b4a48] pl-[8px] text-white">
        <svg width="16" height="16" viewBox="0 0 16 16">
          <path d="M.5.500h15v15H.5z" fill="#ff7a00" stroke="#fff" />
          <path d="M1 1h14v3H1z" fill="#ffb020" />
          <path d="M3 4h3l1-1.500h2L10 4h3v3h-3v7H6.500V7H3z" fill="#fff" />
        </svg>
        <h1 className="flex-1 pl-[5px] text-[12px]">
          ArCADia-TERMOCAD 11.0 Licencja dla: WEWNĘTRZNA, NIEKOMERCYJNA LICENCJA - INTERSOFT [001] - 16. Biurowiec układ VRF - klimatyzacja
        </h1>
        <button aria-label="Minimalizuj" className="flex w-[46px] justify-center"><Min /></button>
        <button aria-label="Maksymalizuj" className="flex w-[46px] justify-center"><Max /></button>
        <button aria-label="Zamknij" className="flex w-[46px] justify-center"><Close /></button>
      </header>

      <div className="flex min-h-0 flex-1">
        <Sidebar />
        <div className="ml-[4px] flex min-w-0 flex-1 flex-col">
          <div className="h-[54px] shrink-0 bg-[#dbdbdb]">
            <div className="flex h-[28px] items-center gap-[10px] pl-[11px]">
              <button aria-label="Zapisz"><SaveIcon /></button>
              <button aria-label="Odśwież"><SwapIcon /></button>
              <button aria-label="Podgląd"><BookSearchIcon /></button>
              <button aria-label="Cofnij"><UndoIcon /></button>
              <button aria-label="Historia cofania"><DropIcon /></button>
              <button aria-label="Ponów"><UndoIcon className="-scale-x-100" /></button>
              <button aria-label="Historia ponawiania"><DropIcon /></button>
              <button aria-label="Biblioteka" className="pl-1"><BoxesIcon /></button>
              <button aria-label="Klucz" className="-ml-[3px]"><LockSignalIcon /></button>
              <button aria-label="Oszczędności" className="-ml-1"><PigIcon /></button>
              <button aria-label="Notatnik"><NotepadIcon /></button>
              <button aria-label="Budynek"><HouseIcon /></button>
              <button className="font-['Liberation_Sans',Arial,sans-serif] text-[16px] font-bold">?</button>
            </div>
            <h2 className="pl-[6px] text-[15px] leading-[22px]">Zyski ciepła - WT 2021</h2>
          </div>
          <div className="flex min-h-0 flex-1 bg-white">
            <main className="flex min-w-0 flex-1 flex-col">
              <div className="flex h-[279px] shrink-0">
                <RoomForm />
                <ResultsCard />
              </div>
              <div className="mt-[3px] flex min-h-0 flex-1">
                <GainsPanel />
              </div>
            </main>
            <div className="mr-[2px] w-[5px] bg-[#f0f0f0]" />
            <Preview />
            <div className="flex w-[25px] shrink-0 items-center justify-center">
              <button aria-label="Rozwiń panel" className="mt-[96px]">
                <svg width="18" height="34" viewBox="0 0 18 34"><path d="M0 17L12 0v5h6v24h-6v5z" fill="#5aa118" /></svg>
              </button>
            </div>
          </div>
          <section className="mt-[5px] h-[81px] shrink-0 bg-white">
            <h3 className="pl-[2px] text-[11px] leading-[18px] font-bold">Raport o błędach</h3>
            <div className="mt-[5px] mr-[6px] ml-[6px] bg-[#efefef] pb-[10px]">
              <div className="bg-white">
                <table className="w-[calc(100%-18px)] table-fixed border-collapse font-['Noto_Sans',sans-serif] text-[11px] leading-[13px]">
                  <thead>
                    <tr className="h-[17px] border-b border-[#a0a0a0]">
                      <th className="w-[46px] border-r border-[#a0a0a0] font-normal">Lp.</th>
                      <th className="w-[165px] border-r border-[#dcdcdc] font-normal">Typ</th>
                      <th className="font-normal">Opis</th>
                    </tr>
                  </thead>
                  <tbody>
                    <tr className="h-6 border-b border-[#a0a0a0]">
                      <td className="border-r border-[#a0a0a0]" />
                      <td colSpan={2} className="border-r border-[#a0a0a0] bg-[#efefef] pl-px">Odśwież listę błędów!</td>
                    </tr>
                  </tbody>
                </table>
              </div>
            </div>
          </section>
          <nav className="flex h-[30px] shrink-0 bg-[#c8c8c8] text-white">
            <button aria-label="Dane wejściowe" className="flex flex-1 items-center justify-center border-r border-[#c8c8c8] bg-[#8ccaf9]"><EditPageIcon /></button>
            <button aria-label="Przegrody" className="flex flex-1 items-center justify-center border-r border-[#c8c8c8] bg-[#b4b4b4]"><EditPageIcon /></button>
            <button aria-label="Strefy" className="flex flex-1 items-center justify-center border-r border-[#c8c8c8] bg-[#8ccaf9]"><EditPageIcon /></button>
            <button aria-label="Definicje przegród" className="flex flex-1 items-center justify-center border-r border-[#c8c8c8] bg-[#8ccaf9]"><SheetIcon /></button>
            <button aria-label="Straty ciepła" className="flex flex-1 items-center justify-center border-r border-[#c8c8c8] bg-[#8ccaf9]"><SheetIcon /></button>
            <button aria-label="Zyski ciepła" className="flex flex-1 items-center justify-center border-r border-[#c8c8c8] bg-[#1473e6]"><SheetIcon /></button>
            <button aria-label="Raporty" className="flex flex-1 items-center justify-center bg-[#b4b4b4]"><ReportIcon /></button>
            <button className="w-[80px] bg-[#1473e6]">Zamknij</button>
          </nav>
        </div>
      </div>

      <button aria-label="Rozwiń menu" className="absolute top-[407px] left-0 z-20 flex h-[150px] w-[23px] items-center bg-[#5aa118] pl-[2px]">
        <svg width="18" height="36" viewBox="0 0 18 36"><path d="M18 18L6 0v6H0v24h6v6z" fill="#fff" /></svg>
      </button>
      <GainsDialog />
    </div>
  );
}
